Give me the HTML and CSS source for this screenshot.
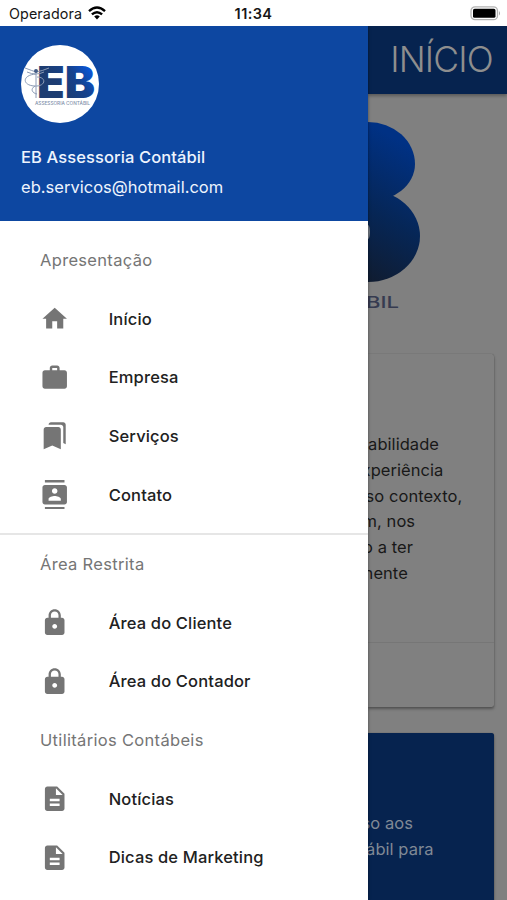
FILE: index.html
```html
<!DOCTYPE html>
<html lang="pt-BR">
<head>
<meta charset="utf-8">
<title>EB Assessoria Contábil</title>
<link rel="stylesheet" href="styles.css">
</head>
<body>
<header class="status">
  <div class="carrier"><span class="carrier-name">Operadora</span>
    <svg class="wifi" viewBox="0 0 18 14"><g fill="none" stroke="#000" stroke-width="2.4"><path d="M1 5.2Q9-2 17 5.2"/><path d="M3.900 8.400Q9 4 14.100 8.400"/></g><path d="M6.200 10.400Q9 8.200 11.800 10.400L9 13.400Z"/></svg>
  </div>
  <span class="clock">11:34</span>
  <svg class="battery" viewBox="0 0 32 16"><rect x="1" y=".9" width="26.5" height="12.8" rx="4" fill="#fff" stroke="#b3b3b3" stroke-width="1.3"/><rect x="3" y="2.8" width="22.5" height="9" rx="1.6"/><path d="M29 5q2 2.3 0 4.6z" fill="#aaa"/></svg>
</header>
<div class="app">
  <nav class="drawer">
    <div class="profile">
      <svg class="avatar" viewBox="0 0 78 78">
        <defs><linearGradient id="eb" gradientUnits="userSpaceOnUse" x1="42" y1="48" x2="74" y2="24"><stop offset="0" stop-color="#1d3d72"/><stop offset=".5" stop-color="#15438f"/><stop offset="1" stop-color="#0759e8"/></linearGradient></defs>
        <circle cx="39" cy="39" r="39" fill="#fff"/>
        <text class="mark" x="16" y="53" textLength="58" lengthAdjust="spacingAndGlyphs" fill="url(#eb)">EB</text>
        <g fill="none" stroke="#8b9bb5" stroke-width="1"><path d="M4 23q8 3 11 4q6-1 13-4M6 27q9 4 17 0M15 24v29"/><path d="M15 29c-14 1-14 11-2 12s13-9 3-9M14 41c-5 3-3 7 2 8"/></g>
        <circle cx="15" cy="26" r="2" fill="#445d86"/>
        <text class="tag" x="14" y="59.500" textLength="55" lengthAdjust="spacingAndGlyphs">ASSESSORIA CONTÁBIL</text>
      </svg>
      <div class="name">EB Assessoria Contábil</div>
      <div class="email">eb.servicos@hotmail.com</div>
    </div>
    <div class="menu">
      <div class="section">Apresentação</div>
      <a class="item"><svg viewBox="0 0 24 24"><path d="M10 20v-6h4v6h5v-8h3L12 3 2 12h3v8z"/></svg><span>Início</span></a>
      <a class="item"><svg viewBox="0 0 24 24"><path fill-rule="evenodd" d="M20 6h-4V4c0-1.110-.890-2-2-2h-4c-1.110 0-2 .890-2 2v2H4c-1.110 0-1.990.890-1.990 2L2 19c0 1.110.890 2 2 2h16c1.110 0 2-.890 2-2V8c0-1.110-.890-2-2-2zm-6 0h-4V4h4v2z"/></svg><span>Empresa</span></a>
      <a class="item"><svg viewBox="0 0 24 24"><path d="M19 18l2 1V3c0-1.100-.900-2-2-2H8.990C7.890 1 7 1.900 7 3h10c1.100 0 2 .900 2 2v13zM15 5H5c-1.100 0-2 .900-2 2v16l7-3 7 3V7c0-1.100-.900-2-2-2z"/></svg><span>Serviços</span></a>
      <a class="item"><svg viewBox="0 0 24 24"><path d="M20 0H4v2h16V0zM4 24h16v-2H4v2zM20 4H4c-1.100 0-2 .900-2 2v12c0 1.100.900 2 2 2h16c1.100 0 2-.900 2-2V6c0-1.100-.900-2-2-2zm-8 2.750c1.240 0 2.250 1.010 2.250 2.250s-1.010 2.250-2.250 2.250S9.750 10.240 9.750 9 10.760 6.750 12 6.750zM17 17H7v-1.500c0-1.670 3.330-2.500 5-2.500s5 .830 5 2.500V17z"/></svg><span>Contato</span></a>
      <hr class="divider">
      <div class="section">Área Restrita</div>
      <a class="item"><svg viewBox="0 0 24 24"><path d="M18 8h-1V6c0-2.760-2.240-5-5-5S7 3.240 7 6v2H6c-1.100 0-2 .900-2 2v10c0 1.100.900 2 2 2h12c1.100 0 2-.900 2-2V10c0-1.100-.900-2-2-2zm-6 9c-1.100 0-2-.900-2-2s.900-2 2-2 2 .900 2 2-.900 2-2 2zm3.100-9H8.900V6c0-1.710 1.390-3.100 3.100-3.100s3.100 1.390 3.100 3.100v2z"/></svg><span>Área do Cliente</span></a>
      <a class="item"><svg viewBox="0 0 24 24"><path d="M18 8h-1V6c0-2.760-2.240-5-5-5S7 3.240 7 6v2H6c-1.100 0-2 .900-2 2v10c0 1.100.900 2 2 2h12c1.100 0 2-.900 2-2V10c0-1.100-.900-2-2-2zm-6 9c-1.100 0-2-.900-2-2s.900-2 2-2 2 .900 2 2-.900 2-2 2zm3.100-9H8.900V6c0-1.710 1.390-3.100 3.100-3.100s3.100 1.390 3.100 3.100v2z"/></svg><span>Área do Contador</span></a>
      <div class="section">Utilitários Contábeis</div>
      <a class="item"><svg viewBox="0 0 24 24"><path d="M14 2H6c-1.100 0-1.990.900-1.990 2L4 20c0 1.100.890 2 1.990 2H18c1.100 0 2-.900 2-2V8l-6-6zm2 16H8v-2h8v2zm0-4H8v-2h8v2zm-3-5V3.500L18.500 9H13z"/></svg><span>Notícias</span></a>
      <a class="item"><svg viewBox="0 0 24 24"><path d="M14 2H6c-1.100 0-1.990.900-1.990 2L4 20c0 1.100.890 2 1.990 2H18c1.100 0 2-.900 2-2V8l-6-6zm2 16H8v-2h8v2zm0-4H8v-2h8v2zm-3-5V3.500L18.500 9H13z"/></svg><span>Dicas de Marketing</span></a>
    </div>
  </nav>
  <main class="page">
    <h1 class="topbar">INÍCIO</h1>
    <div class="brand">
      <div class="lobe upper"></div>
      <div class="lobe lower"><div class="counter"></div></div>
      <svg class="brand-name" viewBox="0 0 34 16"><text x="-2" y="14" textLength="33" lengthAdjust="spacingAndGlyphs">BIL</text></svg>
    </div>
    <section class="card">
      <div class="copy"><p class="l1">abilidade</p><p class="l2">xperiência</p><p class="l3">so contexto,</p><p class="l4">m, nos</p><p class="l5">o a ter</p><p class="l6">nente</p></div>
      <div class="card-action"></div>
    </section>
    <section class="card blue">
      <p class="l7">so aos</p><p class="l8">ábil para</p>
    </section>
  </main>
</div>
</body>
</html>
```
FILE: styles.css
```css
* { box-sizing: border-box; }
body { margin: 0; width: 507px; height: 900px; overflow: hidden; display: flex; flex-direction: column; font-family: Inter, "Liberation Sans", sans-serif; background: #fff; }
p, h1 { margin: 0; }

.status { height: 26px; flex: none; display: grid; grid-template-columns: 1fr auto 1fr; align-items: center; padding: 1px 5px 0 9px; color: #161616; }
.carrier { display: flex; align-items: center; gap: 6px; font-size: 14.3px; letter-spacing: .1px; }
.wifi { width: 18px; height: 14px; margin-top: -2px; }
.clock { font-size: 14.5px; font-weight: 600; letter-spacing: .4px; margin: 0 1px 0 -3px; }
.battery { width: 32px; height: 16px; justify-self: end; }

.app { flex: 1; min-height: 0; display: flex; overflow: hidden; }
.drawer { position: relative; z-index: 1; width: 367.6px; flex: none; background: #fff; box-shadow: 0 0 3px rgba(0,0,0,.45); }
.profile { height: 195px; padding: 19px 21px 0; background: #0d47a1; color: #eef4fd; font-size: 16.5px; }
.avatar { display: block; width: 78px; height: 78px; margin-left: -.5px; }
.mark { font: 900 44px Inter, sans-serif; }
.tag { font: 500 4.5px Inter, sans-serif; fill: #8290aa; }
.name { margin-top: 20.4px; line-height: 29.4px; font-weight: 500; letter-spacing: .1px; }
.email { line-height: 29.4px; letter-spacing: .02px; }

.menu { padding-top: 9.7px; }
.section { height: 58.7px; line-height: 58.7px; padding-left: 40px; color: #757575; font-size: 16.5px; letter-spacing: .32px; }
.item { height: 58.7px; display: flex; align-items: center; padding-left: 40px; gap: 39.3px; color: #212121; font-size: 16.5px; font-weight: 470; letter-spacing: .15px; }
.item svg { width: 29.4px; height: 29.4px; fill: #757575; }
.divider { height: 2px; margin: 8.5px 0 0; border: 0; background: #e6e6e6; }

.page { flex: 1; min-width: 0; overflow: hidden; background: #808080; }
.topbar { height: 68px; line-height: 68px; padding-right: 14px; text-align: right; background: #06234f; color: #8e8e8e; font-size: 35.5px; font-weight: 300; letter-spacing: -.8px; box-shadow: 0 2px 3px rgba(0,0,0,.3); }
.brand { height: 260px; padding-top: 28px; }
.lobe { background: linear-gradient(30deg, #101c30, #062656 38%, #003184 82%); background-size: 60px 160px; }
.upper { width: 47px; height: 80px; border-radius: 0 47px 47px 0 / 0 42px 38px 0; }
.lower { width: 52.5px; height: 92px; margin-top: -12px; padding-top: 35px; border-radius: 0 52px 52px 0 / 0 46px 46px 0; background-position: 0 -68px; }
.counter { width: 2px; height: 14px; border-radius: 0 2px 2px 0 / 0 7px 7px 0; background: #737a84; }
.brand-name { display: block; width: 34px; height: 16px; margin-top: 12px; }
.brand-name text { font: 500 16px Inter, sans-serif; fill: #363b50; }

.card { margin-right: 13px; border-radius: 0 2.5px 2.5px 0; box-shadow: 0 2px 3px rgba(0,0,0,.35), 0 0 1px rgba(0,0,0,.35); font-size: 16.5px; line-height: 25.7px; letter-spacing: .05px; white-space: nowrap; }
.copy { height: 288px; padding-top: 78.3px; color: #181818; }
.card-action { height: 65px; border-top: 1px solid #767676; }
.l1 { margin-left: .5px; }
.l2 { margin-left: -6px; }
.l3 { margin-left: -2px; }
.l4 { margin-left: -5px; }
.l5 { margin-left: -4.5px; }
.l6 { margin-left: -4px; }
.blue { height: 200px; margin-top: 26px; padding-top: 78.3px; background: #06234f; color: #808995; }
.l7 { margin-left: -6px; }
.l8 { margin-left: -1.5px; }
```
